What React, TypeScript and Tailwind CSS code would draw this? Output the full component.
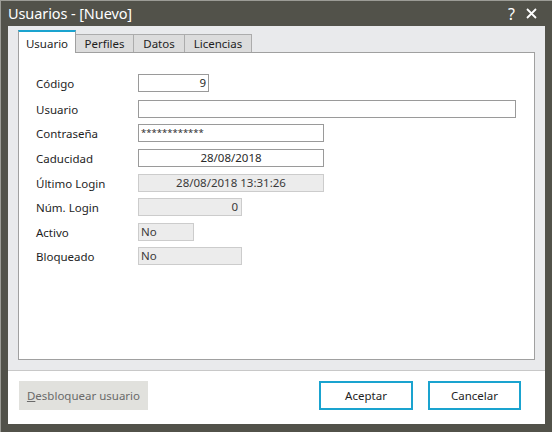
import React from "react";

const font = { fontFamily: '"Noto Sans", "Open Sans", sans-serif' };

function Row({ label, children, mt }: { label: string; children: React.ReactNode; mt: string }) {
  return (
    <div className={`flex items-center h-[18px] ${mt}`}>
      <div className="w-[102px] shrink-0 text-[11.5px] text-[#1e1e1e] leading-none pt-[2px]">{label}</div>
      {children}
    </div>
  );
}

export default function App() {
  return (
    <div
      className="w-[552px] h-[432px] bg-[#52524a] border-t border-l border-[#9c9c96] flex flex-col overflow-hidden"
      style={font}
    >
      <div className="h-[25px] flex items-center pl-[7px] pr-[14px] shrink-0">
        <div className="text-[14.5px] text-white leading-none flex-1 tracking-[-0.1px]">Usuarios - [Nuevo]</div>
        <div className="text-[16px] text-white leading-none mr-[11px]">?</div>
        <svg width="11" height="11" viewBox="0 0 11 11" className="mr-[1px]">
          <path d="M1 1 L10 10 M10 1 L1 10" stroke="white" strokeWidth="1.8" />
        </svg>
      </div>
      <div className="flex-1 mx-[7px] mb-[8px] flex flex-col bg-[#e9eaec]">
        <div className="flex items-end h-[26px] pl-[10px] pt-[3px] relative z-10">
          <div className="w-[58px] h-[23px] bg-white border-t-2 border-[#1aa3cf] border-x border-x-[#a0a0a0] flex items-start justify-center pt-[3px] text-[11.5px] text-[#1e1e1e] -mb-px">
            Usuario
          </div>
          <div className="w-[58px] h-[18px] bg-[#dcdcdc] border-t border-r border-[#acacac] flex items-center justify-center text-[11.5px] text-[#1e1e1e]">
            Perfiles
          </div>
          <div className="w-[51px] h-[18px] bg-[#dcdcdc] border-t border-r border-[#acacac] flex items-center justify-center text-[11.5px] text-[#1e1e1e]">
            Datos
          </div>
          <div className="w-[67px] h-[18px] bg-[#dcdcdc] border-t border-r border-[#acacac] flex items-center justify-center text-[11.5px] text-[#1e1e1e]">
            Licencias
          </div>
        </div>
        <div className="mx-[10px] h-[308px] bg-white border border-[#a0a0a0] pl-[17px] pt-[21px] flex flex-col">
          <Row label="Código" mt="">
            <div className="w-[71px] h-[18px] border border-[#9a9a9a] flex items-center justify-end pr-[2px] text-[11.5px] text-[#2a2a2a]">9</div>
          </Row>
          <Row label="Usuario" mt="mt-[8px]">
            <div className="w-[378px] h-[18px] border border-[#9a9a9a]"></div>
          </Row>
          <Row label="Contraseña" mt="mt-[6px]">
            <div className="w-[186px] h-[18px] border border-[#9a9a9a] flex items-center pl-[2px] text-[9.5px] text-[#2a2a2a] leading-none">************</div>
          </Row>
          <Row label="Caducidad" mt="mt-[7px]">
            <div className="w-[186px] h-[18px] border border-[#9a9a9a] flex items-center justify-center text-[11.5px] text-[#2a2a2a]">28/08/2018</div>
          </Row>
          <Row label="Último Login" mt="mt-[7px]">
            <div className="w-[186px] h-[18px] bg-[#ececec] border border-[#cccccc] flex items-center justify-center text-[11.5px] text-[#3a3a3a]">28/08/2018 13:31:26</div>
          </Row>
          <Row label="Núm. Login" mt="mt-[6px]">
            <div className="w-[104px] h-[18px] bg-[#ececec] border border-[#cccccc] flex items-center justify-end pr-[3px] text-[11.5px] text-[#3a3a3a]">0</div>
          </Row>
          <Row label="Activo" mt="mt-[7px]">
            <div className="w-[56px] h-[18px] bg-[#ececec] border border-[#cccccc] flex items-center pl-[2px] text-[11.5px] text-[#3a3a3a]">No</div>
          </Row>
          <Row label="Bloqueado" mt="mt-[6px]">
            <div className="w-[104px] h-[18px] bg-[#ececec] border border-[#cccccc] flex items-center pl-[2px] text-[11.5px] text-[#3a3a3a]">No</div>
          </Row>
        </div>
        <div className="h-[11px] border-b border-[#c8c8c8] shrink-0"></div>
        <div className="flex-1 bg-white flex items-start pt-[10px] pl-[11px] pr-[24px]">
          <div className="w-[129px] h-[29px] bg-[#e1e1dd] flex items-center justify-center text-[11.5px] text-[#6a6a6a]">
            <span><span className="underline">D</span>esbloquear usuario</span>
          </div>
          <div className="flex-1"></div>
          <div className="w-[94px] h-[29px] border-2 border-[#1aa3cf] flex items-center justify-center text-[11.5px] text-[#1e1e1e]">Aceptar</div>
          <div className="w-[93px] h-[29px] ml-[15px] border-2 border-[#1aa3cf] flex items-center justify-center text-[11.5px] text-[#1e1e1e]">Cancelar</div>
        </div>
      </div>
    </div>
  );
}
